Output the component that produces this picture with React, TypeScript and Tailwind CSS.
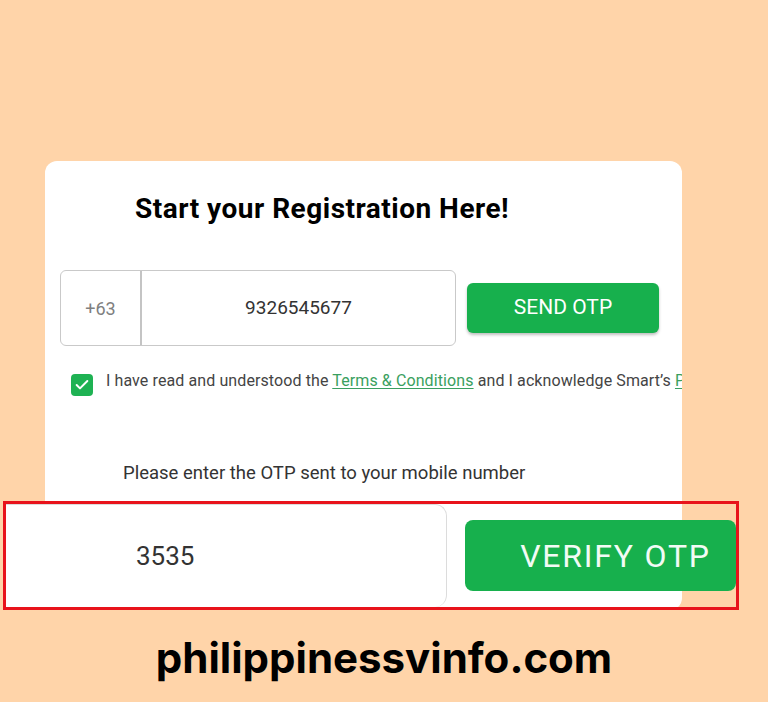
import { Check } from "lucide-react";

export default function App() {
  return (
    <div
      className="w-[768px] h-[702px] overflow-hidden bg-[#ffd4a9] flex flex-col pt-[161px]"
      style={{ fontFamily: "Roboto, 'Liberation Sans', sans-serif" }}
    >
      <div className="ml-[45px] w-[637px] bg-white rounded-xl flex flex-col">
        <h1 className="mt-[30px] pl-[90px] text-[28px] leading-[36px] font-bold text-black tracking-[0.5px]">
          Start your Registration Here!
        </h1>

        <div className="mt-[43px] ml-[15px] flex items-center">
          <div className="w-[396px] h-[76px] border border-[#c9c9c9] rounded-md flex">
            <div className="w-[81px] border-r-2 border-[#c4c4c4] flex items-center justify-center text-[18px] text-[#808080]">
              +63
            </div>
            <div className="flex-1 flex items-center justify-center text-[19px] text-[#333]">
              9326545677
            </div>
          </div>
          <button className="ml-[11px] w-[192px] h-[50px] rounded-md bg-[#17b04d] text-white text-[21px] shadow-[0_2px_3px_rgba(0,0,0,0.25)]">
            SEND OTP
          </button>
        </div>

        {/* terms line is cut at the card edge, like the screenshot */}
        <div className="mt-[24px] ml-[26px] flex items-start whitespace-nowrap overflow-hidden">
          <span className="mt-[4px] w-[22px] h-[22px] shrink-0 rounded-[4px] bg-[#1eb253] flex items-center justify-center">
            <Check className="w-[16px] h-[16px] text-white" strokeWidth={3} />
          </span>
          <p className="ml-[13px] text-[16px] leading-[22px] text-[#444] tracking-[0.1px]">
            I have read and understood the{" "}
            <span className="text-[#3a9f60] underline underline-offset-2">Terms &amp; Conditions</span>{" "}
            and I acknowledge Smart’s{" "}
            <span className="text-[#3a9f60] underline underline-offset-2">Privacy Policy</span>
          </p>
        </div>

        <p className="mt-[65px] pl-[78px] text-[18.5px] leading-[24px] text-[#333]">
          Please enter the OTP sent to your mobile number
        </p>

        <div className="mt-[16px] ml-[-42px] w-[736px] h-[109px] border-[3px] border-[#e8131b] flex items-center">
          <div className="w-[441px] h-full bg-white rounded-r-xl border-r border-t border-[#dcdcdc] flex items-center pl-[130px] text-[26px] text-[#333]">
            3535
          </div>
          <button className="ml-[18px] flex-1 h-[71px] rounded-lg bg-[#17b04d] text-[#f2fbf5] text-[32px] tracking-[1.8px] pl-[30px]">
            VERIFY OTP
          </button>
        </div>
      </div>

      <p
        className="mt-[20px] text-center text-[42px] leading-[56px] font-bold text-black"
        style={{ fontFamily: "Inter, 'Noto Sans', sans-serif" }}
      >
        philippinessvinfo.com
      </p>
    </div>
  );
}
